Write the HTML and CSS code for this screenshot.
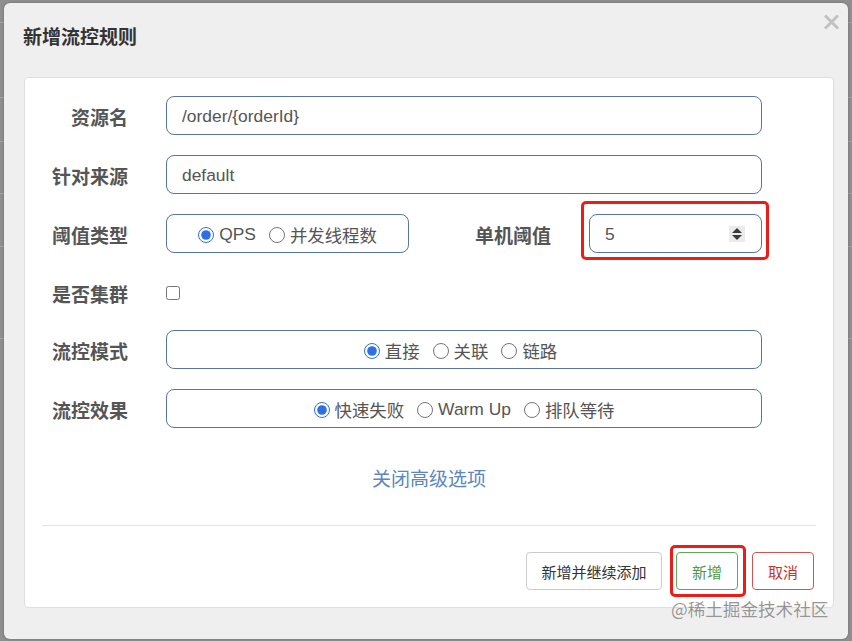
FILE: index.html
```html
<!DOCTYPE html>
<html lang="zh-CN">
<head>
<meta charset="utf-8">
<title>新增流控规则</title>
<link rel="stylesheet" href="styles.css">
</head>
<body>
<div class="modal">
  <div class="modal-header">
    <h4 class="modal-title">新增流控规则</h4>
    <span class="close" aria-label="关闭">
      <svg width="15" height="14" viewBox="0 0 15 14"><path d="M2 1.5 L13 12.5 M13 1.5 L2 12.5" stroke="#c2c2c2" stroke-width="3" stroke-linecap="square"/></svg>
    </span>
  </div>
  <div class="panel">
    <div class="form">
      <div class="row">
        <label class="label">资源名</label>
        <div class="field"><input class="input" type="text" value="/order/{orderId}"></div>
      </div>
      <div class="row">
        <label class="label">针对来源</label>
        <div class="field"><input class="input" type="text" value="default"></div>
      </div>
      <div class="row">
        <label class="label">阈值类型</label>
        <div class="radio-box short">
          <label class="radio"><input type="radio" name="grade" checked>QPS</label>
          <label class="radio"><input type="radio" name="grade">并发线程数</label>
        </div>
        <label class="label label2">单机阈值</label>
        <div class="number-wrap">
          <div class="number">
            <span class="num-value">5</span>
            <span class="spinner"><i class="up"></i><i class="down"></i></span>
          </div>
          <span class="highlight hl-number"></span>
        </div>
      </div>
      <div class="row row-check">
        <label class="label">是否集群</label>
        <input class="check" type="checkbox">
      </div>
      <div class="row">
        <label class="label">流控模式</label>
        <div class="radio-box wide mode">
          <label class="radio"><input type="radio" name="mode" checked>直接</label>
          <label class="radio"><input type="radio" name="mode">关联</label>
          <label class="radio"><input type="radio" name="mode">链路</label>
        </div>
      </div>
      <div class="row">
        <label class="label">流控效果</label>
        <div class="radio-box wide">
          <label class="radio"><input type="radio" name="effect" checked>快速失败</label>
          <label class="radio"><input type="radio" name="effect">Warm Up</label>
          <label class="radio"><input type="radio" name="effect">排队等待</label>
        </div>
      </div>
    </div>
    <div class="advanced"><a class="link">关闭高级选项</a></div>
    <div class="separator"></div>
    <div class="footer">
      <button class="btn btn-default">新增并继续添加</button>
      <span class="btn-wrap">
        <button class="btn btn-success">新增</button>
        <span class="highlight hl-btn"></span>
      </span>
      <button class="btn btn-danger">取消</button>
    </div>
  </div>
</div>
<div class="watermark">@稀土掘金技术社区</div>
</body>
</html>
```
FILE: styles.css
```css
* { box-sizing: border-box; }

html, body {
  margin: 0;
  padding: 0;
  width: 852px;
  height: 641px;
  overflow: hidden;
}

body {
  position: relative;
  font-family: "Liberation Sans", "Noto Sans CJK SC", sans-serif;
  background-color: #8f8f8f;
  background-image:
    linear-gradient(#a3a3a3, #a3a3a3),
    linear-gradient(#a3a3a3, #a3a3a3),
    linear-gradient(#a3a3a3, #a3a3a3),
    linear-gradient(#a3a3a3, #a3a3a3),
    linear-gradient(#a3a3a3, #a3a3a3),
    linear-gradient(#a3a3a3, #a3a3a3);
  background-repeat: no-repeat;
  background-size: 100% 1px;
  background-position: 0 22px, 0 97px, 0 141px, 0 193px, 0 246px, 0 338px;
  color: #555;
}

.modal {
  margin: 3px 0 0 4px;
  width: 844px;
  height: 636px;
  background: #efefef;
  border-radius: 6px;
  box-shadow: 0 0 3px rgba(0,0,0,0.25);
}

.modal-header {
  height: 74px;
  display: flex;
  justify-content: space-between;
  align-items: flex-start;
  padding: 0 9px 0 19px;
}

.modal-title {
  margin: 20px 0 0;
  font-family: "Noto Sans CJK SC", sans-serif;
  font-size: 19px;
  line-height: 26px;
  font-weight: 700;
  color: #333;
}

.close {
  margin-top: 12px;
  display: block;
  width: 15px;
  height: 14px;
}
.close svg { display: block; }

.panel {
  margin-left: 20px;
  width: 810px;
  height: 531px;
  background: #fff;
  border: 1px solid #dedede;
  border-radius: 4px;
  padding: 18px 0 0 0;
  display: flex;
  flex-direction: column;
}

.form {
  display: flex;
  flex-direction: column;
  gap: 20px;
  padding-right: 71px;
}

.row {
  display: flex;
  align-items: center;
  height: 39px;
}

.label {
  width: 103px;
  flex: none;
  text-align: right;
  font-family: "Noto Sans CJK SC", sans-serif;
  font-weight: 700;
  font-size: 19px;
  color: #555;
  margin-right: 38px;
  line-height: 26px;
  padding-top: 2px;
}

.label2 {
  width: 142px;
}

.field { flex: 1; }

.input {
  display: block;
  width: 100%;
  height: 39px;
  border: 1px solid #5877a0;
  border-radius: 8px;
  padding: 2px 15px 0;
  font-family: "Liberation Sans", "Noto Sans CJK SC", sans-serif;
  font-size: 17.4px;
  color: #555;
  background: #fff;
  outline: none;
}

.radio-box {
  height: 39px;
  border: 1px solid #5877a0;
  border-radius: 8px;
  display: flex;
  align-items: center;
  justify-content: center;
  gap: 13px;
  padding-top: 2px;
}
.radio-box.short { width: 243px; flex: none; }
.radio-box.wide { flex: 1; }
.radio-box.mode { padding-right: 7px; }

.radio {
  display: flex;
  align-items: center;
  font-size: 17.4px;
  color: #555;
  font-family: "Liberation Sans", "Noto Sans CJK SC", sans-serif;
  white-space: nowrap;
}
.radio input {
  width: 16px;
  height: 16px;
  margin: 0 5px 0 0;
  accent-color: #2f6fe6;
}

.number-wrap {
  position: relative;
  flex: 1;
}

.number {
  height: 39px;
  border: 1px solid #5877a0;
  border-radius: 8px;
  display: flex;
  align-items: center;
  justify-content: space-between;
  padding: 1px 16px 0 15px;
  font-size: 17.4px;
  color: #555;
}

.spinner {
  width: 16px;
  height: 16px;
  background: #ebebeb;
  display: flex;
  flex-direction: column;
  align-items: center;
  justify-content: center;
  gap: 2px;
}
.spinner i {
  display: block;
  width: 0;
  height: 0;
  border-left: 5px solid transparent;
  border-right: 5px solid transparent;
}
.spinner .up { border-bottom: 5px solid #3a3a3a; }
.spinner .down { border-top: 5px solid #3a3a3a; }

.highlight {
  position: absolute;
  border: 3px solid #ee1c17;
  border-radius: 5px;
  pointer-events: none;
}
.hl-number { top: -13px; left: -8px; right: -7px; bottom: -7px; }

.row-check {
  height: 37px;
  padding-top: 3px;
}
.check {
  width: 14px;
  height: 14px;
  margin: 0;
}

.advanced {
  margin-top: 37px;
  text-align: center;
  height: 26px;
}
.link {
  font-family: "Noto Sans CJK SC", sans-serif;
  font-size: 19px;
  line-height: 26px;
  color: #5a87bf;
  cursor: pointer;
}

.separator {
  margin: 34px 17px 0 17px;
  height: 1px;
  background: #e3e3e3;
}

.footer {
  display: flex;
  justify-content: flex-end;
  align-items: center;
  gap: 14px;
  padding: 26px 19px 0 0;
}

.btn {
  height: 38px;
  padding: 0 15px;
  background: #fff;
  border: 1px solid #ccc;
  border-radius: 4px;
  font-family: "Noto Sans CJK SC", sans-serif;
  font-size: 15px;
  color: #333;
  cursor: pointer;
}
.btn-success { color: #4b9a47; border-color: #5ea85a; width: 62px; padding: 0; }
.btn-danger { color: #c9302c; border-color: #d25450; width: 62px; padding: 0; }
.btn-default { width: 136px; padding: 0; }

.btn-wrap {
  position: relative;
  display: block;
}
.btn-wrap .btn { display: block; }
.hl-btn { top: -7px; left: -6px; right: -8px; bottom: -7px; }

.watermark {
  position: absolute;
  left: 671px;
  top: 596px;
  font-family: "Noto Sans CJK SC", sans-serif;
  font-size: 17.6px;
  line-height: 26px;
  color: rgba(130,130,130,0.85);
  text-shadow: 0 0 1px #fff;
  white-space: nowrap;
}
```
